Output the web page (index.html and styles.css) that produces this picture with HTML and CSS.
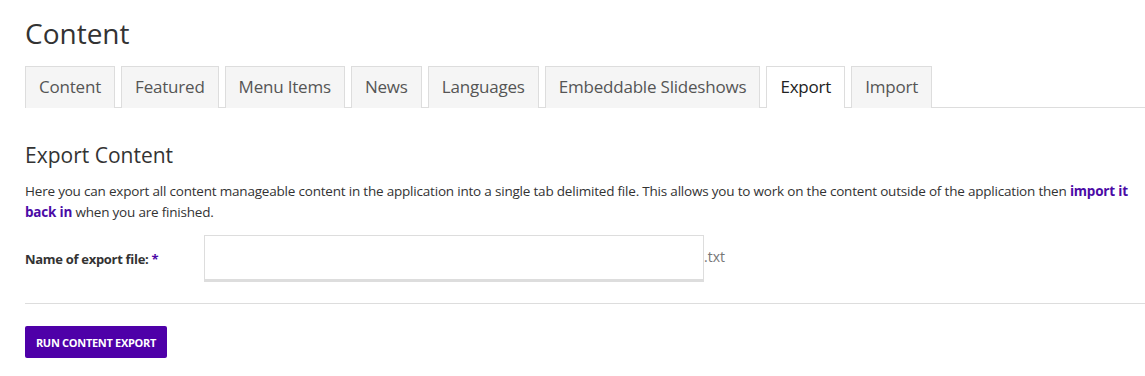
FILE: index.html
```html
<!DOCTYPE html>
<html lang="en">
<head>
    <meta charset="UTF-8">
    <title>Content</title>
    <link rel="stylesheet" href="styles.css">
</head>
<body>
    <div class="page">
        <h1 class="page-title">Content</h1>

        <!-- Section tabs -->
        <ul class="tabs">
            <li class="tab">Content</li>
            <li class="tab">Featured</li>
            <li class="tab">Menu Items</li>
            <li class="tab">News</li>
            <li class="tab">Languages</li>
            <li class="tab">Embeddable Slideshows</li>
            <li class="tab tab-active">Export</li>
            <li class="tab">Import</li>
        </ul>

        <h2 class="section-title">Export Content</h2>
        <p class="intro">
            Here you can export all content manageable content in the application into a single tab delimited file. This allows you to work on the content outside of the application then <a href="#" class="link">import it back in</a> when you are finished.
        </p>

        <form class="export-form">
            <div class="field">
                <label class="field-label" for="export-name">Name of export file: <span class="required">*</span></label>
                <input class="field-input" id="export-name" type="text">
                <span class="field-suffix">.txt</span>
            </div>
            <hr class="divider">
            <button class="btn-primary" type="button">Run Content Export</button>
        </form>
    </div>
</body>
</html>
```

FILE: styles.css
```css
/* Reset and base styles */
*,
*::before,
*::after {
    margin: 0;
    padding: 0;
    box-sizing: border-box;
}

body {
    font-family: 'Open Sans', 'Noto Sans', 'Liberation Sans', sans-serif;
    background: #fff;
    color: #333;
}

.page {
    padding: 16px 0 0 25px;
}

.page-title {
    font-size: 28px;
    font-weight: 400;
    color: #333;
    line-height: 34px;
    margin-bottom: 16px;
}

/* Tabs */
.tabs {
    display: flex;
    gap: 6px;
    list-style: none;
    border-bottom: 1px solid #ddd;
    height: 42px;
}

.tab {
    height: 42px;
    padding: 0 13px;
    border: 1px solid #ddd;
    border-bottom: none;
    background: #f5f5f5;
    color: #555;
    font-size: 17px;
    line-height: 40px;
    letter-spacing: -0.2px;
}

.tab-active {
    background: #fff;
    color: #222;
    height: 42px;
    margin-bottom: -1px;
}

/* Export section */
.section-title {
    font-size: 21px;
    font-weight: 400;
    color: #333;
    margin-top: 34px;
    line-height: 26px;
}

.intro {
    font-size: 13.5px;
    line-height: 21px;
    color: #333;
    margin-top: 13px;
    padding-right: 10px;
    letter-spacing: -0.2px;
}

.link {
    color: #4b0ba6;
    font-weight: 700;
    text-decoration: none;
}

.export-form {
    margin-top: 12px;
}

.field {
    display: flex;
    align-items: center;
}

.field-label {
    width: 179px;
    font-size: 13px;
    font-weight: 700;
    color: #333;
    letter-spacing: -0.3px;
}

.required {
    color: #4b0ba6;
}

.field-input {
    width: 500px;
    height: 47px;
    border: 1px solid #ddd;
    border-bottom: 3px solid #ddd;
    background: #fff;
    outline: none;
}

.field-suffix {
    font-size: 14px;
    color: #777;
    margin-top: -4px;
}

.divider {
    border: none;
    border-top: 1px solid #ddd;
    margin: 21px 0 22px;
}

.btn-primary {
    display: block;
    width: 142px;
    height: 32px;
    border: none;
    border-radius: 2px;
    background: #4e00a8;
    color: #fff;
    font-family: inherit;
    font-size: 11px;
    font-weight: 700;
    text-transform: uppercase;
    letter-spacing: -0.3px;
}
```
